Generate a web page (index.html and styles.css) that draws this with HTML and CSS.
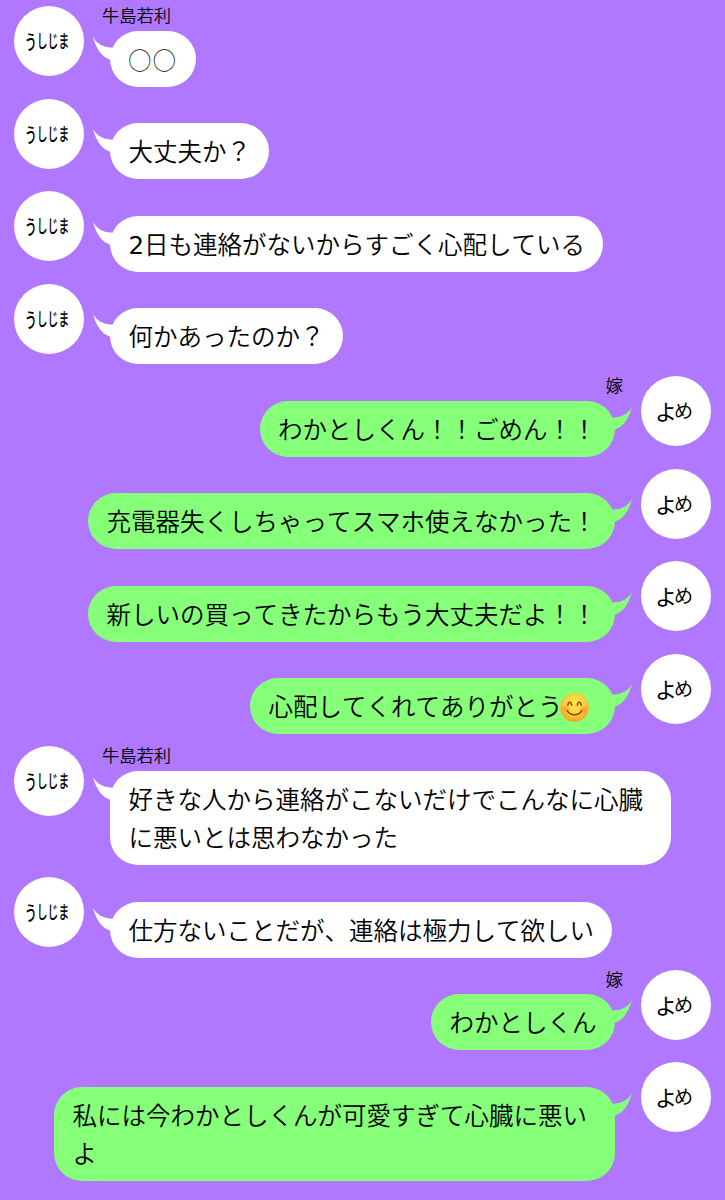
FILE: index.html
```html
<!DOCTYPE html>
<html lang="ja">
<head>
    <meta charset="UTF-8">
    <meta name="viewport" content="width=device-width, initial-scale=1.0">
    <title>トーク</title>
    <link rel="stylesheet" href="styles.css">
</head>
<body>
    <svg width="0" height="0" class="defs">
        <symbol id="tail" viewBox="0 0 22 24">
            <path d="M0 0C4 7 10 10 18 10.5L22 12V24L18 23C8 20 3 11 0 0Z"/>
        </symbol>
    </svg>

    <main class="chat">
        <div class="row">
            <div class="avatar"><span class="ushijima"><b>う</b>しじま</span></div>
            <div class="message">
                <div class="name">牛島若利</div>
                <div class="bubble"><svg class="tail"><use href="#tail"/></svg><span class="circles">◯◯</span></div>
            </div>
        </div>
        <div class="row">
            <div class="avatar"><span class="ushijima"><b>う</b>しじま</span></div>
            <div class="message">
                <div class="name"></div>
                <div class="bubble"><svg class="tail"><use href="#tail"/></svg>大丈夫か？</div>
            </div>
        </div>
        <div class="row">
            <div class="avatar"><span class="ushijima"><b>う</b>しじま</span></div>
            <div class="message">
                <div class="name"></div>
                <div class="bubble"><svg class="tail"><use href="#tail"/></svg><span class="digit">2</span>日も連絡がないからすごく心配している</div>
            </div>
        </div>
        <div class="row">
            <div class="avatar"><span class="ushijima"><b>う</b>しじま</span></div>
            <div class="message">
                <div class="name"></div>
                <div class="bubble"><svg class="tail"><use href="#tail"/></svg>何かあったのか？</div>
            </div>
        </div>

        <div class="row me">
            <div class="avatar"><span class="yome"><b>よ</b>め</span></div>
            <div class="message">
                <div class="name">嫁</div>
                <div class="bubble"><svg class="tail"><use href="#tail"/></svg>わかとしくん！！ごめん！！</div>
            </div>
        </div>
        <div class="row me">
            <div class="avatar"><span class="yome"><b>よ</b>め</span></div>
            <div class="message">
                <div class="name"></div>
                <div class="bubble"><svg class="tail"><use href="#tail"/></svg>充電器失くしちゃってスマホ使えなかった！</div>
            </div>
        </div>
        <div class="row me">
            <div class="avatar"><span class="yome"><b>よ</b>め</span></div>
            <div class="message">
                <div class="name"></div>
                <div class="bubble"><svg class="tail"><use href="#tail"/></svg>新しいの買ってきたからもう大丈夫だよ！！</div>
            </div>
        </div>
        <div class="row me">
            <div class="avatar"><span class="yome"><b>よ</b>め</span></div>
            <div class="message">
                <div class="name"></div>
                <div class="bubble"><svg class="tail"><use href="#tail"/></svg>心配してくれてありがとう<svg class="emoji" viewBox="0 0 28 28" role="img" aria-label="😊">
                    <defs>
                        <radialGradient id="face" cx="50%" cy="40%" r="60%">
                            <stop offset="0" stop-color="#ffe64a"/>
                            <stop offset=".6" stop-color="#ffd03b"/>
                            <stop offset="1" stop-color="#f5a01e"/>
                        </radialGradient>
                        <radialGradient id="blush">
                            <stop offset="0" stop-color="#ff7a2a" stop-opacity=".7"/>
                            <stop offset="1" stop-color="#ff8a2a" stop-opacity="0"/>
                        </radialGradient>
                    </defs>
                    <circle cx="14" cy="14" r="13.8" fill="url(#face)"/>
                    <circle cx="5.5" cy="16" r="5" fill="url(#blush)"/>
                    <circle cx="22.5" cy="16" r="5" fill="url(#blush)"/>
                    <path class="line" d="M7.6 11.8C8.2 7.8 10.6 7.8 11.3 11.8M16.7 11.8C17.4 7.8 19.8 7.8 20.4 11.8M7 17.2C10.3 22.2 17.7 22.2 21 17.2"/>
                </svg></div>
            </div>
        </div>

        <div class="row">
            <div class="avatar"><span class="ushijima"><b>う</b>しじま</span></div>
            <div class="message">
                <div class="name">牛島若利</div>
                <div class="bubble"><svg class="tail"><use href="#tail"/></svg>好きな人から連絡がこないだけでこんなに心臓に悪いとは思わなかった</div>
            </div>
        </div>
        <div class="row">
            <div class="avatar"><span class="ushijima"><b>う</b>しじま</span></div>
            <div class="message">
                <div class="name"></div>
                <div class="bubble"><svg class="tail"><use href="#tail"/></svg>仕方ないことだが、連絡は極力して欲しい</div>
            </div>
        </div>

        <div class="row me">
            <div class="avatar"><span class="yome"><b>よ</b>め</span></div>
            <div class="message">
                <div class="name">嫁</div>
                <div class="bubble"><svg class="tail"><use href="#tail"/></svg>わかとしくん</div>
            </div>
        </div>
        <div class="row me">
            <div class="avatar"><span class="yome"><b>よ</b>め</span></div>
            <div class="message">
                <div class="name"></div>
                <div class="bubble"><svg class="tail"><use href="#tail"/></svg>私には今わかとしくんが可愛すぎて心臓に悪いよ</div>
            </div>
        </div>
    </main>
</body>
</html>
```

FILE: styles.css
```css
* {
    box-sizing: border-box;
}
body {
    margin: 0;
    background-color: #b077ff;
    color: #000;
    font-family: "Noto Sans CJK JP", sans-serif;
    font-kerning: none;
    font-weight: 350;
}
.defs {
    position: absolute;
}
.chat {
    display: flex;
    flex-direction: column;
    gap: 12px;
    height: 1200px;
    padding: 6.2px 14px 0;
    overflow: hidden;
}
.row {
    display: flex;
    flex-shrink: 0;
    gap: 18px;
}
.row.me {
    flex-direction: row-reverse;
}
.avatar {
    display: flex;
    flex-shrink: 0;
    align-items: center;
    justify-content: center;
    width: 70px;
    height: 70px;
    border-radius: 50%;
    background-color: #fff;
    font-weight: 400;
    line-height: 26px;
    white-space: nowrap;
}
.avatar b {
    font-weight: inherit;
}
.ushijima {
    font-size: 18px;
    font-weight: 500;
    transform: translate(-2px, 0) scaleX(0.6);
}
.ushijima b {
    font-size: 20px;
    vertical-align: -2px;
}
.yome {
    font-size: 19px;
    letter-spacing: -2px;
    transform: translate(-3px, -1px);
}
.yome b {
    font-size: 22px;
    letter-spacing: -3px;
    vertical-align: -2px;
}
.message {
    display: flex;
    flex-direction: column;
    align-items: flex-start;
}
.me .message {
    align-items: flex-end;
}
.name {
    height: 24.6px;
    font-size: 17.3px;
    line-height: 18px;
}
.bubble {
    position: relative;
    max-width: 561px;
    margin: 0 8px;
    padding: 9px 18.4px 8.5px;
    border-radius: 28px;
    background-color: #fff;
    font-size: 24.5px;
    line-height: 38.4px;
    word-break: break-all;
}
.me .bubble {
    background-color: #86ff79;
}
.circles {
    font-size: 22.5px;
    letter-spacing: 2px;
    line-height: 1;
}
.digit {
    font-family: "DejaVu Sans", sans-serif;
    font-weight: 400;
    line-height: 1;
}
.tail {
    position: absolute;
    top: 6px;
    left: -17px;
    width: 22px;
    height: 24px;
    fill: #fff;
}
.me .tail {
    right: -17px;
    left: auto;
    fill: #86ff79;
    transform: scaleX(-1);
}
.emoji {
    width: 29px;
    height: 29px;
    margin: 0 7.5px 0 -2.5px;
    vertical-align: -6px;
}
.emoji .line {
    fill: none;
    stroke: #7a4410;
    stroke-width: 1.4;
    stroke-linecap: round;
}
```
